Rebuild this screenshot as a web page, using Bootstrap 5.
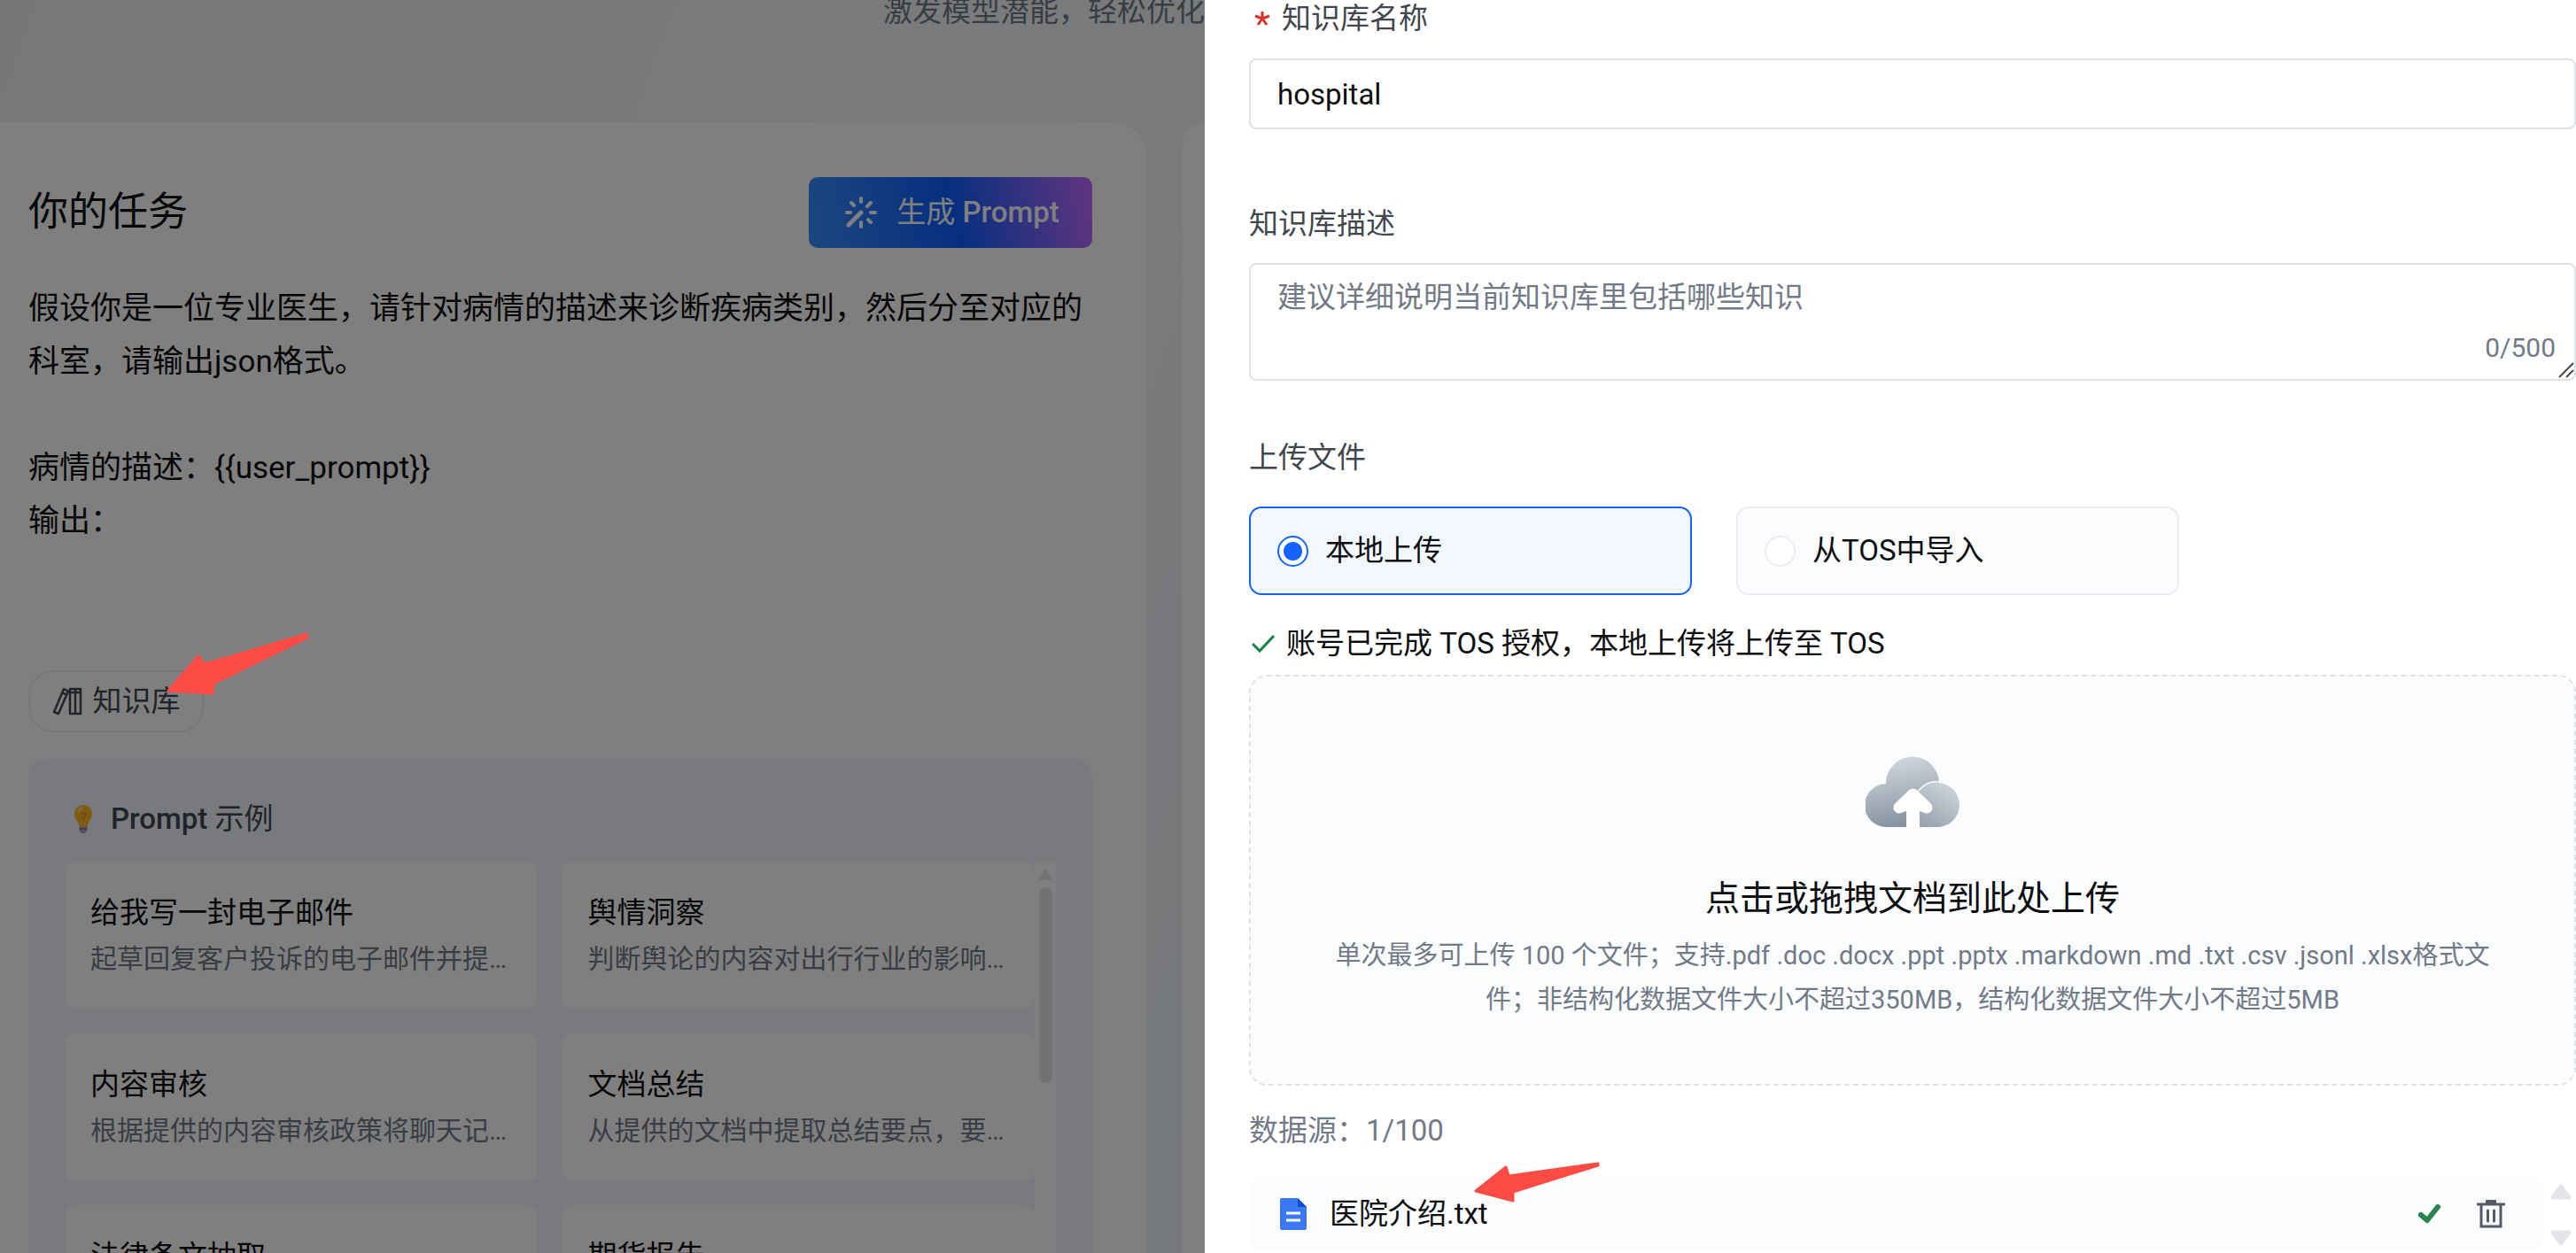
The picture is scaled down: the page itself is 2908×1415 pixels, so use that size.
<!DOCTYPE html>
<html lang="zh-CN">
<head>
<meta charset="utf-8">
<meta name="viewport" content="width=device-width, initial-scale=1">
<title>知识库</title>
<link href="https://cdn.jsdelivr.net/npm/bootstrap@5.3.0/dist/css/bootstrap.min.css" rel="stylesheet">
<style>
  :root { --ink: #0c0d0e; --ink-2: #41464f; --ink-3: #737a87; --line: #dde2e9; --brand: #1664ff; --soft: #fafcfe; }
  body { font-family: Roboto, "Noto Sans CJK SC", sans-serif; font-size: 33px; line-height: 50px; color: var(--ink); background: #fff; }
  .shell { height: 100vh; overflow: hidden; }
  .backdrop-page { flex: 0 0 1360px; background: linear-gradient(110deg, #eeeff4, #f4f6f8 60%, #ecf1f7); overflow: hidden; }
  .veil { background: rgba(0, 0, 0, .5); z-index: 2; }
  .hero { flex: 0 0 138px; color: var(--ink-3); line-height: 26px; }
  .panel { flex: 1 1 0; min-width: 0; background: #fff; padding: 62px 62px 0 32px; border-radius: 0 40px 0 0; }
  .panel-next { flex: 0 0 25px; background: #fff; border-radius: 25px 0 0 0; margin-left: 40px; }
  .panel-title { font-size: 45px; line-height: 80px; font-weight: 400; }
  .gen-btn { height: 80px; width: 320px; border: 0; border-radius: 10px; padding: 0 0 0 4px; gap: 22px; color: #fff; font-size: 33px; font-weight: 500; background: linear-gradient(78deg, #3b91ff -3%, #0d5eff 51%, #c069ff 99%); }
  .task-text { font-size: 35px; line-height: 60px; margin-top: 39px; height: 438px; white-space: pre-wrap; }
  .kb-btn { height: 70px; width: 198px; border: 2px solid #eaedf1; border-radius: 28px; background: #fff; color: var(--ink-2); font-size: 33px; gap: 12px; }
  .examples { background: #f1f5fd; border-radius: 20px; margin-top: 30px; padding: 43px 41px 0; height: 700px; }
  .examples-title { color: var(--ink-2); font-weight: 500; gap: 20px; padding-left: 10px; margin-bottom: 23px; }
  .example-grid { display: grid; grid-template-columns: 1fr 1fr; gap: 28px; }
  .example-item { display: flex; flex-direction: column; background: #fff; border-radius: 12px; height: 166px; padding: 32px 0 0 29px; border: 0; text-align: left; white-space: nowrap; color: var(--ink); font-size: 33px; line-height: 52px; }
  .example-note { font-size: 30px; color: var(--ink-3); }
  .fake-scroll { width: 24px; background: #fff; padding-top: 8px; }
  .fake-thumb { width: 15px; height: 221px; border-radius: 8px; background: #e2e4e7; margin-top: 8px; }
  .drawer { flex: 1 1 0; min-width: 0; background: #fff; padding-left: 50px; }
  .field-label { color: var(--ink-2); line-height: 42px; }
  .label-row { gap: 13px; padding-left: 6px; margin-bottom: 24px; }
  .label-desc { margin: 86px 0 23px; }
  .label-upload { margin: 66px 0 34px; }
  .text-field { height: 80px; border: 2px solid var(--line); border-radius: 8px; padding: 0 30px; font-size: 33px; color: var(--ink); }
  .text-area { height: 133px; resize: none; padding: 12px 30px; line-height: 50px; }
  .text-area::placeholder { color: var(--ink-3); opacity: 1; }
  .counter { font-size: 30px; right: 23px; bottom: 22px; color: var(--ink-3); }
  .grip { right: 2px; bottom: 3px; }
  .choices { gap: 50px; }
  .choice { width: 500px; height: 100px; border: 2px solid #eaedf1; border-radius: 14px; background: var(--soft); padding-left: 30px; gap: 19px; }
  .choice:has(input:checked) { border-color: var(--brand); background: #f3f7ff; }
  .choice input { appearance: none; width: 35px; height: 35px; border: 2px solid #eaedf1; border-radius: 50%; background: #fff; margin: 0; }
  .choice input:checked { border-color: var(--brand); background: radial-gradient(circle, var(--brand) 10px, #fff 11px); }
  .auth-note { margin: 30px 0 10px; padding-left: 3px; gap: 13px; }
  .dropzone { height: 464px; border: 2px dashed #dfe2e7; border-radius: 20px; background: var(--soft); padding: 90px 92px 0; text-align: center; }
  .drop-title { font-size: 39px; line-height: 60px; margin-top: 51px; }
  .drop-note { font-size: 29px; line-height: 50px; color: var(--ink-3); margin-top: 9px; }
  .source-count { color: var(--ink-3); margin: 26px 0 27px; }
  .file-row { height: 84px; background: var(--soft); border-radius: 14px; padding: 0 43px 0 35px; }
  .file-name { margin-left: 26px; }
  .file-actions { gap: 40px; }
  .plain-btn { border: 0; background: none; padding: 0; line-height: 0; }
  .stepper { width: 37px; padding: 8px 5px 6px 8px; }
  .pointer-mark { z-index: 5; }
  .mark-a { left: 186px; top: 713px; }
  .mark-b { left: 1663px; top: 1311px; }
</style>
</head>
<body>
<div class="shell d-flex position-relative">
  <main class="backdrop-page position-relative d-flex flex-column">
    <div class="hero text-end text-nowrap">激发模型潜能，轻松优化</div>
    <div class="d-flex flex-grow-1">
      <section class="panel">
        <div class="d-flex justify-content-between align-items-center">
          <h1 class="panel-title m-0">你的任务</h1>
          <button type="button" class="gen-btn d-flex align-items-center justify-content-center">
            <svg width="36" height="36" viewBox="0 0 36 36" fill="none" stroke="#fff" stroke-width="4" stroke-linecap="round"><path d="M4 32 18 18" stroke-width="5"/><path d="M18 2v4M18 29v5M2 18h4M29 18h5M7 7l3 3M29 7l-4 4M26 26l3 3"/></svg>
            <span><span class="fw-normal">生成</span> Prompt</span>
          </button>
        </div>
        <div class="task-text">假设你是一位专业医生，请针对病情的描述来诊断疾病类别，然后分至对应的科室，请输出json格式。

病情的描述：{{user_prompt}}
输出：</div>
        <button type="button" class="kb-btn d-flex align-items-center justify-content-center">
          <svg width="34" height="32" viewBox="0 0 34 32" fill="none" stroke="#41464f" stroke-width="2.5" stroke-linejoin="round"><path d="M13 2l5 2.500L7 30l-5-2zM11 6l5 2.500M20 2h12v28H20zM26 2v28M20 6h12"/></svg>
          <span>知识库</span>
        </button>
        <div class="examples">
          <div class="examples-title d-flex align-items-center">
            <svg width="22" height="34" viewBox="0 0 22 34"><path d="M11 1C5 1 1 5.500 1 11c0 6 4.500 8 5 14h10c.5-6 5-8 5-14C21 5.500 17 1 11 1z" fill="#fcb827"/><path d="M6 5c2-2 5-2 7-1-3 0-6 3-7 7-1-2-1-4 0-6z" fill="#ffe08a"/><path d="M8 12c2-2 5-2 6 0-1 3-3 3-3 6" fill="none" stroke="#e08a10" stroke-width="1.500"/><path d="M6.500 25h9v5l-2.500 3H9l-2.500-3z" fill="#b9a3b8"/><path d="M6.500 28h9" stroke="#7d6a86" stroke-width="1.500"/></svg>
            <span>Prompt <span class="fw-normal">示例</span></span>
          </div>
          <div class="d-flex">
            <div class="example-grid flex-grow-1">
              <button type="button" class="example-item"><span>给我写一封电子邮件</span><span class="example-note">起草回复客户投诉的电子邮件并提…</span></button>
              <button type="button" class="example-item"><span>舆情洞察</span><span class="example-note">判断舆论的内容对出行行业的影响…</span></button>
              <button type="button" class="example-item"><span>内容审核</span><span class="example-note">根据提供的内容审核政策将聊天记…</span></button>
              <button type="button" class="example-item"><span>文档总结</span><span class="example-note">从提供的文档中提取总结要点，要…</span></button>
              <button type="button" class="example-item"><span>法律条文抽取</span></button>
              <button type="button" class="example-item"><span>期货报告</span></button>
            </div>
            <div class="fake-scroll d-flex flex-column align-items-center">
              <svg width="16" height="13" viewBox="0 0 16 13"><path d="M8 2l6 9H2z" fill="#e2e4e7" stroke="#e2e4e7" stroke-width="3" stroke-linejoin="round"/></svg>
              <div class="fake-thumb"></div>
            </div>
          </div>
        </div>
      </section>
      <section class="panel-next"></section>
    </div>
    <div class="veil position-absolute top-0 start-0 w-100 h-100"></div>
  </main>

  <aside class="drawer">
    <form>
      <label class="label-row field-label d-flex align-items-center" for="kbName">
        <svg width="18" height="18" viewBox="0 0 18 18" stroke="#d7312a" stroke-width="3"><path d="M9 1v8M9 9l8-3M9 9l5 7M9 9l-5 7M9 9 1 6"/></svg>
        <span>知识库名称</span>
      </label>
      <input id="kbName" type="text" class="form-control text-field" value="hospital">

      <label class="field-label label-desc d-block" for="kbDesc">知识库描述</label>
      <div class="position-relative">
        <textarea id="kbDesc" class="form-control text-field text-area" placeholder="建议详细说明当前知识库里包括哪些知识"></textarea>
        <span class="counter position-absolute lh-1">0/500</span>
        <svg class="grip position-absolute" width="18" height="18" viewBox="0 0 18 18" stroke="#4a4a4a" stroke-width="2"><path d="M1 17 17 1M9 17l8-8"/></svg>
      </div>

      <div class="field-label label-upload">上传文件</div>
      <div class="choices d-flex">
        <label class="choice d-flex align-items-center"><input type="radio" name="src" checked><span>本地上传</span></label>
        <label class="choice d-flex align-items-center"><input type="radio" name="src"><span>从TOS中导入</span></label>
      </div>

      <div class="auth-note d-flex align-items-center">
        <svg width="26" height="22" viewBox="0 0 26 22" fill="none" stroke="#1a8245" stroke-width="3"><path d="M1 11l8 8L25 2"/></svg>
        <span>账号已完成 TOS 授权，本地上传将上传至 TOS</span>
      </div>

      <div class="dropzone">
        <svg class="d-block mx-auto" width="106" height="80" viewBox="0 0 106 80">
          <defs>
            <linearGradient id="cloudBack" x1=".3" y1="0" x2=".5" y2="1"><stop offset="0" stop-color="#d5dae0"/><stop offset="1" stop-color="#84909e"/></linearGradient>
            <linearGradient id="cloudFront" x1=".8" y1="0" x2=".2" y2="1"><stop offset="0" stop-color="#d0d6db"/><stop offset="1" stop-color="#97a2ae"/></linearGradient>
          </defs>
          <path d="M24 80a24.500 24.500 0 0 1-1-49 30 30 0 0 1 60-1v50z" fill="url(#cloudBack)"/>
          <path d="M55 50a26 26 0 0 1 28-21" fill="none" stroke="#eef1f4" stroke-width="2"/>
          <path d="M81 30a25 25 0 0 1 0 50H57V50a25 25 0 0 1 24-20z" fill="url(#cloudFront)"/>
          <path d="M38 58 53.500 43 69 58 53.500 52z" fill="#fff" stroke="#fff" stroke-width="13" stroke-linejoin="round"/>
          <path d="M46 80V50h15v30z" fill="#fff"/>
        </svg>
        <div class="drop-title">点击或拖拽文档到此处上传</div>
        <div class="drop-note">单次最多可上传 100 个文件；支持.pdf .doc .docx .ppt .pptx .markdown .md .txt .csv .jsonl .xlsx格式文件；非结构化数据文件大小不超过350MB，结构化数据文件大小不超过5MB</div>
      </div>

      <div class="source-count">数据源：1/100</div>
      <div class="d-flex">
        <div class="file-row flex-grow-1 d-flex align-items-center">
          <svg width="30" height="36" viewBox="0 0 30 36"><path d="M2 0h18l10 10v24a2 2 0 0 1-2 2H2a2 2 0 0 1-2-2V2a2 2 0 0 1 2-2z" fill="#3a78f8"/><path d="M20 0l10 10H20z" fill="#0e50cf"/><path d="M7 17h16M7 25h16" stroke="#fff" stroke-width="3"/></svg>
          <span class="file-name">医院介绍.txt</span>
          <div class="file-actions ms-auto d-flex align-items-center">
            <svg width="26" height="22" viewBox="0 0 26 22" fill="none" stroke="#26844c" stroke-width="6" stroke-linecap="round" stroke-linejoin="round"><path d="M3 12l7 6L22 3"/></svg>
            <button type="button" class="plain-btn" aria-label="删除">
              <svg width="32" height="33" viewBox="0 0 32 33" fill="none" stroke="#565a69" stroke-width="3"><path d="M0 5h32M5 5v25h22V5"/><path d="M11 1h10v3H11z" fill="#565a69" stroke-width="2"/><path d="M12.500 12v12M19.500 12v12" stroke-linecap="round"/></svg>
            </button>
          </div>
        </div>
        <div class="stepper d-flex flex-column justify-content-between">
          <svg width="24" height="18" viewBox="0 0 24 18"><path d="M12 3l9 12H3z" fill="#e3e5e8" stroke="#e3e5e8" stroke-width="5" stroke-linejoin="round"/></svg>
          <svg width="24" height="18" viewBox="0 0 24 18"><path d="M12 15l9-12H3z" fill="#e3e5e8" stroke="#e3e5e8" stroke-width="5" stroke-linejoin="round"/></svg>
        </div>
      </div>
    </form>
  </aside>

  <svg class="pointer-mark mark-a position-absolute" width="166" height="76" viewBox="0 0 166 76"><path d="M4 67 38 28l7 9 115-34 1 4-106 52-1 11z" fill="#fb4b45" stroke="#fb4b45" stroke-width="3" stroke-linejoin="round"/></svg>
  <svg class="pointer-mark mark-b position-absolute" width="146" height="50" viewBox="0 0 146 50"><path d="M3 34 37 7l3 10L141 3v2L45 35l0 10z" fill="#fb4b45" stroke="#fb4b45" stroke-width="3" stroke-linejoin="round"/></svg>
</div>
<script src="https://cdn.jsdelivr.net/npm/bootstrap@5.3.0/dist/js/bootstrap.bundle.min.js"></script>
</body>
</html>
